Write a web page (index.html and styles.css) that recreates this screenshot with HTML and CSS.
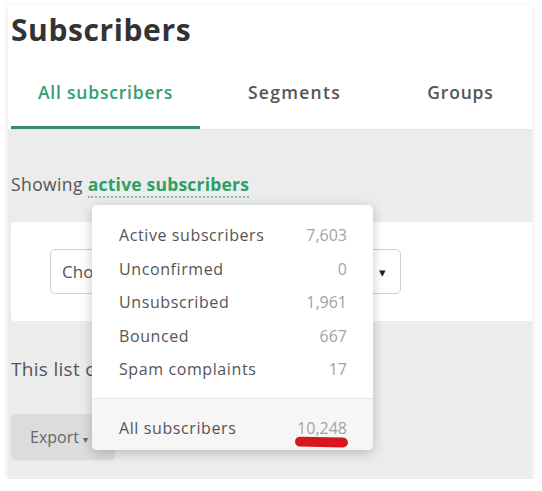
FILE: index.html
```html
<!DOCTYPE html>
<html lang="en">
<head>
    <meta charset="UTF-8">
    <meta name="viewport" content="width=device-width, initial-scale=1.0">
    <title>Subscribers</title>
    <link rel="stylesheet" href="styles.css">
</head>
<body>
    <div class="frame">
        <!-- header with tabs -->
        <div class="header">
            <h1>Subscribers</h1>
            <nav class="tabs">
                <a class="tab active">All subscribers</a>
                <a class="tab">Segments</a>
                <a class="tab">Groups</a>
            </nav>
        </div>

        <div class="content">
            <p class="showing">Showing <span class="filter-link">active subscribers</span></p>

            <div class="filter-wrap">
                <div class="card">
                    <div class="select">
                        <span>Choose a group</span>
                        <span class="caret">&#9662;</span>
                    </div>
                </div>

                <!-- dropdown with counts -->
                <div class="dropdown">
                    <ul class="dropdown-list">
                        <li><span>Active subscribers</span><span class="count">7,603</span></li>
                        <li><span>Unconfirmed</span><span class="count">0</span></li>
                        <li><span>Unsubscribed</span><span class="count">1,961</span></li>
                        <li><span>Bounced</span><span class="count">667</span></li>
                        <li><span>Spam complaints</span><span class="count">17</span></li>
                    </ul>
                    <div class="dropdown-footer">
                        <span>All subscribers</span>
                        <span class="count total">10,248<span class="mark"></span></span>
                    </div>
                </div>
            </div>

            <p class="list-note">This list contains all subscribers</p>

            <button type="button" class="export-btn">Export <span class="caret-small">&#9662;</span></button>
        </div>
    </div>
</body>
</html>
```

FILE: styles.css
```css
/* page */
body {
    font-family: 'Open Sans', 'Liberation Sans', sans-serif;
    background-color: #ffffff;
    margin: 0;
    padding: 0;
    color: #555555;
}

.frame {
    width: 524px;
    margin: 5px 0 0 8px;
    box-shadow: 0 2px 6px rgba(0, 0, 0, 0.12);
}

/* header */
.header {
    background-color: #ffffff;
    padding: 0 0 0 3px;
    border-bottom: 1px solid #e4e4e4;
}

h1 {
    margin: 0;
    padding-top: 4px;
    height: 46px;
    font-size: 30px;
    font-weight: 700;
    color: #333333;
    letter-spacing: 0.6px;
}

.tabs {
    display: grid;
    grid-template-columns: 189px 189px 1fr;
    margin-top: 22px;
}

.tab {
    text-align: center;
    font-size: 17.5px;
    font-weight: 600;
    color: #555555;
    height: 49px;
    line-height: 31px;
    letter-spacing: 0.8px;
    border-bottom: 3px solid transparent;
}

.tab:nth-child(2) {
    letter-spacing: 1.3px;
}

.tab.active {
    color: #32a06c;
    border-bottom-color: #3b8c6b;
}

/* gray content */
.content {
    background-color: #ececec;
    padding: 1px 0 20px 3px;
}

.showing {
    margin: 41px 0 0;
    font-size: 17.5px;
    line-height: 24px;
    letter-spacing: 0.4px;
}

.filter-link {
    color: #2f9e69;
    font-weight: 700;
    letter-spacing: 0.2px;
    border-bottom: 2px dotted #7fbf9f;
}

.filter-wrap {
    position: relative;
    margin-top: 26px;
}

.card {
    background-color: #ffffff;
    border-radius: 4px 0 0 4px;
    height: 99px;
    padding: 27px 0 0 39px;
    box-sizing: border-box;
}

.select {
    width: 351px;
    height: 45px;
    box-sizing: border-box;
    border: 1px solid #d0d0d0;
    border-radius: 5px;
    display: flex;
    align-items: center;
    justify-content: space-between;
    padding: 0 14px 0 11px;
    font-size: 17px;
    color: #555555;
}

.caret {
    font-size: 13px;
    color: #222222;
}

/* dropdown */
.dropdown {
    position: absolute;
    top: -17px;
    left: 81px;
    width: 281px;
    background-color: #ffffff;
    border-radius: 5px;
    box-shadow: 0 3px 12px rgba(0, 0, 0, 0.22);
    font-size: 16px;
    letter-spacing: 0.6px;
}

.dropdown-list {
    list-style: none;
    margin: 0;
    padding: 14px 26px 11px 27px;
    border-bottom: 1px solid #e6e6e6;
}

.dropdown-list li {
    display: flex;
    justify-content: space-between;
    height: 33.5px;
    line-height: 33.5px;
}

.count {
    color: #a3a3a3;
    letter-spacing: 0;
}

.dropdown-footer {
    display: flex;
    justify-content: space-between;
    background-color: #f6f6f6;
    border-radius: 0 0 5px 5px;
    padding: 18px 26px 11px 27px;
    line-height: 22px;
}

.total {
    position: relative;
}

/* red marker under the total */
.mark {
    position: absolute;
    left: -2px;
    right: -1px;
    top: 20px;
    height: 10px;
    background-color: #d9161c;
    border-radius: 6px;
    transform: rotate(1deg);
}

.list-note {
    margin: 35px 0 0;
    font-size: 19px;
    line-height: 26px;
    letter-spacing: 0.3px;
    white-space: nowrap;
    overflow: hidden;
}

.export-btn {
    margin-top: 32px;
    width: 104px;
    height: 45px;
    border: none;
    border-radius: 5px;
    background-color: #dcdcdc;
    color: #666666;
    font-family: inherit;
    font-size: 16px;
    text-align: left;
    padding-left: 19px;
    box-shadow: 0 1px 2px rgba(0, 0, 0, 0.1);
}

.caret-small {
    font-size: 10px;
}
```
